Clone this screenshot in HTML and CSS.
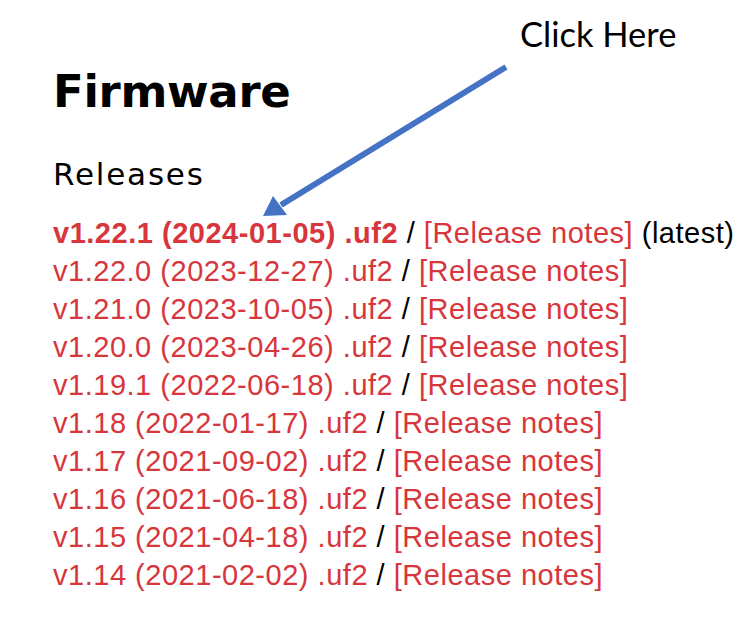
FILE: index.html
```html
<!DOCTYPE html>
<html lang="en">
<head>
<meta charset="utf-8">
<title>Firmware</title>
<link rel="stylesheet" href="styles.css">
</head>
<body>
<main class="page">
  <h1 class="title">Firmware</h1>
  <h2 class="subtitle">Releases</h2>
  <ul class="releases">
    <li class="latest"><a class="file" href="#">v1.22.1 (2024-01-05) .uf2</a> / <a class="notes" href="#">[Release notes]</a> (latest)</li>
    <li><a class="file" href="#">v1.22.0 (2023-12-27) .uf2</a> / <a class="notes" href="#">[Release notes]</a></li>
    <li><a class="file" href="#">v1.21.0 (2023-10-05) .uf2</a> / <a class="notes" href="#">[Release notes]</a></li>
    <li><a class="file" href="#">v1.20.0 (2023-04-26) .uf2</a> / <a class="notes" href="#">[Release notes]</a></li>
    <li><a class="file" href="#">v1.19.1 (2022-06-18) .uf2</a> / <a class="notes" href="#">[Release notes]</a></li>
    <li><a class="file" href="#">v1.18 (2022-01-17) .uf2</a> / <a class="notes" href="#">[Release notes]</a></li>
    <li><a class="file" href="#">v1.17 (2021-09-02) .uf2</a> / <a class="notes" href="#">[Release notes]</a></li>
    <li><a class="file" href="#">v1.16 (2021-06-18) .uf2</a> / <a class="notes" href="#">[Release notes]</a></li>
    <li><a class="file" href="#">v1.15 (2021-04-18) .uf2</a> / <a class="notes" href="#">[Release notes]</a></li>
    <li><a class="file" href="#">v1.14 (2021-02-02) .uf2</a> / <a class="notes" href="#">[Release notes]</a></li>
  </ul>
  <div class="callout">Click Here</div>
  <svg class="arrow" width="742" height="622" viewBox="0 0 742 622" aria-hidden="true">
    <line x1="506" y1="67" x2="281" y2="205" stroke="#4472c4" stroke-width="6"/>
    <polygon points="263,216 273,196 287,215" fill="#4472c4"/>
  </svg>
</main>
</body>
</html>
```
FILE: styles.css
```css
html, body {
  margin: 0;
  padding: 0;
  background: #ffffff;
}
.page {
  position: relative;
  width: 742px;
  height: 622px;
  box-sizing: border-box;
  padding: 64px 0 0 53px;
  color: #000;
}
.title {
  margin: 0;
  font-family: "DejaVu Sans", sans-serif;
  font-weight: bold;
  font-size: 45px;
  line-height: 56px;
  letter-spacing: -0.3px;
}
.subtitle {
  margin: 34px 0 0 0;
  font-family: "DejaVu Sans", sans-serif;
  font-weight: normal;
  font-size: 31px;
  line-height: 40px;
  letter-spacing: 1.8px;
}
.releases {
  list-style: none;
  margin: 20px 0 0 0;
  padding: 0;
  font-family: "Liberation Sans", Arial, sans-serif;
  font-size: 29px;
  line-height: 38px;
  letter-spacing: 0.52px;
  white-space: nowrap;
}
.releases a {
  color: #d7363c;
  text-decoration: none;
}
.latest .file {
  font-weight: bold;
}
.callout {
  position: absolute;
  left: 520px;
  top: 14px;
  font-family: Lato, "Open Sans", sans-serif;
  font-size: 34.5px;
  line-height: 40px;
}
.arrow {
  position: absolute;
  left: 0;
  top: 0;
  pointer-events: none;
}
```
